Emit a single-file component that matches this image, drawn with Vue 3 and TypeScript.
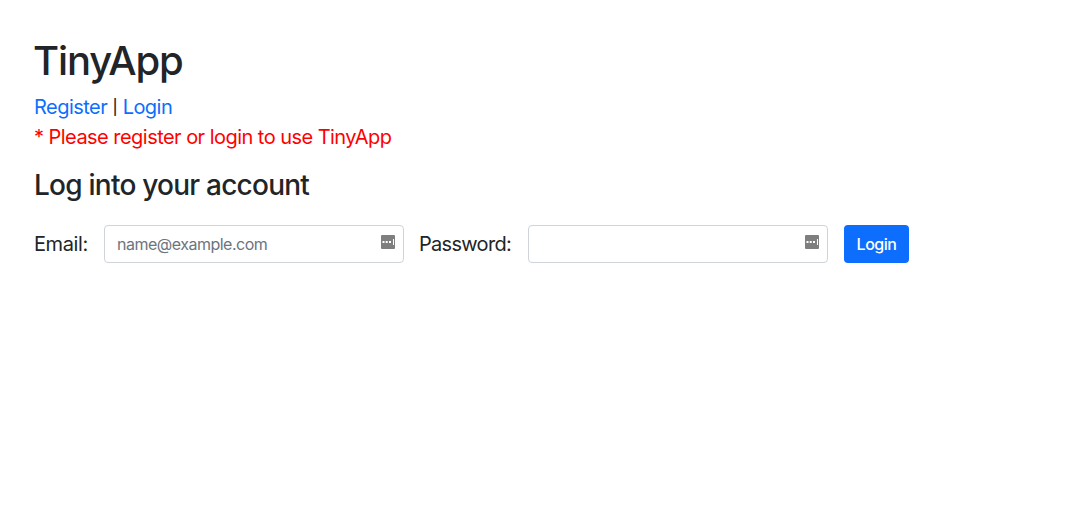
<script setup lang="ts">
import { ref } from 'vue'

const email = ref<string>('')
const password = ref<string>('')
</script>

<template>
  <main class="page">
    <h1>TinyApp</h1>
    <nav><a href="#">Register</a><span class="bar">|</span><a href="#">Login</a></nav>
    <p class="notice">* Please register or login to use TinyApp</p>
    <h3>Log into your account</h3>
    <form class="row" @submit.prevent>
      <label for="email" class="l1">Email:</label>
      <div class="field">
        <input id="email" v-model="email" type="email" placeholder="name@example.com" />
        <svg class="key" viewBox="0 0 14 14"><rect width="14" height="14" rx="1" fill="#7f7f7f" /><path d="M1.5 6h2v2h-2zM4.7 6h2v2h-2zM8 6h2v2H8zM12 4h1v6h-1z" fill="#fff" /></svg>
      </div>
      <label for="password" class="l2">Password:</label>
      <div class="field">
        <input id="password" v-model="password" type="password" />
        <svg class="key" viewBox="0 0 14 14"><rect width="14" height="14" rx="1" fill="#7f7f7f" /><path d="M1.5 6h2v2h-2zM4.7 6h2v2h-2zM8 6h2v2H8zM12 4h1v6h-1z" fill="#fff" /></svg>
      </div>
      <button type="submit">Login</button>
    </form>
  </main>
</template>

<style>
body { margin: 0; background: #fff; }
</style>
<style scoped>
.page { padding: 37px 34px 0; font: 400 20px/30px Inter, "Liberation Sans", sans-serif; color: #212529; letter-spacing: -0.54px; }
h1 { margin: 0 0 7px -1px; font-size: 40px; line-height: 48px; font-weight: 500; letter-spacing: -1.15px; }
nav { display: flex; height: 30px; }
a { color: #0d6efd; text-decoration: none; }
.bar { width: 15.5px; text-align: center; font-size: 15px; font-weight: 500; }
.notice { margin: 0; color: #f00; }
h3 { margin: 16px 0 22px; font-size: 28px; line-height: 35px; font-weight: 500; letter-spacing: -0.76px; }
.row { display: flex; align-items: center; height: 38px; }
.l1 { width: 70px; letter-spacing: -0.4px; }
.l2 { width: 109px; margin-left: 15px; letter-spacing: -0.7px; }
.field { position: relative; width: 300px; height: 38px; }
input { box-sizing: border-box; width: 300px; height: 38px; padding: 6px 12px; border: 1px solid #ced4da; border-radius: 4px; font: 400 16px/24px Inter, sans-serif; letter-spacing: -0.5px; background: #fff; display: block; }
input::placeholder { color: #6c757d; opacity: 1; }
.key { position: absolute; width: 14px; height: 14px; right: 9px; top: 10px; }
button { box-sizing: border-box; width: 65px; height: 38px; margin-left: 16px; padding: 0; border: 0; border-radius: 4px; background: #0d6efd; color: #fff; font: 500 16px/24px Inter, sans-serif; letter-spacing: -0.5px; }
</style>
